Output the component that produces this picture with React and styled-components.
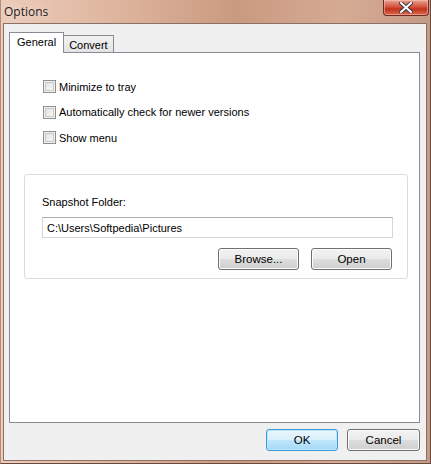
import styled, { createGlobalStyle } from 'styled-components';

const Global = createGlobalStyle`
	html, body {
		margin: 0;
		padding: 0;
		background: #c8a08a;
	}
	* {
		box-sizing: border-box;
	}
`;

const Window = styled.div`
	width: 431px;
	height: 464px;
	display: flex;
	flex-direction: column;
	padding: 0 3px 2px 2px;
	background: linear-gradient(
		to right,
		#ecccbb 0%,
		#dcb29a 30%,
		#c99a80 55%,
		#d6ab94 80%,
		#c49a86 100%
	);
	font-family: 'Liberation Sans', Arial, sans-serif;
	font-size: 11px;
	color: #000;
	border-left: 1px solid #b78a78;
	border-right: 1px solid #6b4a3e;
	border-bottom: 1px solid #6b4a3e;
`;

const TitleBar = styled.div`
	height: 23px;
	display: flex;
	align-items: flex-start;
	justify-content: space-between;
`;

const Title = styled.span`
	font-family: 'Open Sans', 'Liberation Sans', sans-serif;
	font-size: 12px;
	color: #1b1b1b;
	padding: 3px 0 0 1px;
	text-shadow: 0 0 6px rgba(255, 240, 230, 0.9);
`;

const CloseButton = styled.div`
	width: 46px;
	height: 16px;
	margin-right: -2px;
	border: 1px solid #6e2a22;
	border-top: none;
	border-radius: 0 0 4px 4px;
	background: linear-gradient(to bottom, #e9a595 0%, #d4533c 45%, #c3311d 60%, #d96a4c 100%);
	display: grid;
	place-items: center;
	box-shadow: inset 0 0 0 1px rgba(255, 200, 190, 0.5);

	svg {
		display: block;
	}
`;

const Client = styled.div`
	flex: 1;
	background: #f0f0f0;
	border: 1px solid #8b7066;
	display: flex;
	flex-direction: column;
	padding: 8px 6px 8px 5px;
`;

const Tabs = styled.div`
	display: flex;
	align-items: flex-end;
	height: 21px;
	position: relative;
	z-index: 1;
	margin-bottom: -1px;
`;

const Tab = styled.div`
	height: ${(p) => (p.$active ? '21px' : '18px')};
	padding: ${(p) => (p.$active ? '0 7px 2px 7px' : '1px 5px 0 5px')};
	display: flex;
	align-items: center;
	border: 1px solid #898c95;
	border-bottom: ${(p) => (p.$active ? 'none' : '1px solid #898c95')};
	margin-left: ${(p) => (p.$active ? '0' : '-1px')};
	background: ${(p) =>
		p.$active ? '#fff' : 'linear-gradient(to bottom, #f2f2f2, #e3e3e3)'};
`;

const Panel = styled.div`
	height: 371px;
	background: #fff;
	border: 1px solid #898c95;
	padding: 27px 14px 0 14px;
	display: flex;
	flex-direction: column;
`;

const Checks = styled.div`
	display: flex;
	flex-direction: column;
	gap: 12.5px;
	padding-left: 19px;
`;

const CheckRow = styled.label`
	display: flex;
	align-items: center;
	gap: 3px;
	height: 13px;
`;

const Box = styled.span`
	width: 13px;
	height: 13px;
	border: 1px solid #8e8f8f;
	background: linear-gradient(135deg, #dcdcdc 0%, #f4f4f4 70%, #fafafa 100%);
	box-shadow: inset 0 0 0 1px #f2f2f2, inset 0 0 0 2px #c9c9c9;
`;

const Group = styled.div`
	margin-top: 30px;
	width: 384px;
	height: 105px;
	border: 1px solid #dcdcdc;
	border-radius: 3px;
	padding: 20px 14px 0 17px;
	display: flex;
	flex-direction: column;
`;

const Label = styled.div`
	height: 14px;
	line-height: 14px;
`;

const PathInput = styled.div`
	margin-top: 8px;
	width: 351px;
	height: 21px;
	border: 1px solid #d3d6da;
	border-top-color: #abadb3;
	padding: 0 4px;
	display: flex;
	align-items: center;
`;

const ButtonRow = styled.div`
	margin-top: 10px;
	display: flex;
	justify-content: flex-end;
	gap: 12px;
	padding-right: 1px;
`;

const Button = styled.div`
	width: ${(p) => p.$w || 81}px;
	height: 22px;
	border: 1px solid ${(p) => (p.$focus ? '#3c9ad8' : '#707070')};
	border-radius: 3px;
	display: grid;
	place-items: center;
	font-size: 11.5px;
	background: ${(p) =>
		p.$focus
			? 'linear-gradient(to bottom, #eaf6fd 0%, #d9f0fc 50%, #bee6fd 51%, #a7d9f5 100%)'
			: 'linear-gradient(to bottom, #f2f2f2 0%, #ebebeb 50%, #dddddd 51%, #cfcfcf 100%)'};
	box-shadow: inset 0 0 0 1px ${(p) => (p.$focus ? '#b8e6fc' : '#fcfcfc')};
`;

const Footer = styled.div`
	margin-top: auto;
	display: flex;
	justify-content: flex-end;
	gap: 9px;
	padding-bottom: 1px;
`;

const App = () => {
	return (
		<>
			<Global />
			<Window>
				<TitleBar>
					<Title>Options</Title>
					<CloseButton>
						<svg width='14' height='11' viewBox='0 0 14 11'>
							<path
								d='M2 1 L12 10 M12 1 L2 10'
								stroke='#3a3a4a'
								strokeWidth='4'
								strokeLinecap='square'
							/>
							<path
								d='M2 1 L12 10 M12 1 L2 10'
								stroke='#ffffff'
								strokeWidth='2'
								strokeLinecap='square'
							/>
						</svg>
					</CloseButton>
				</TitleBar>
				<Client>
					<Tabs>
						<Tab $active>General</Tab>
						<Tab>Convert</Tab>
					</Tabs>
					<Panel>
						<Checks>
							<CheckRow>
								<Box />
								Minimize to tray
							</CheckRow>
							<CheckRow>
								<Box />
								Automatically check for newer versions
							</CheckRow>
							<CheckRow>
								<Box />
								Show menu
							</CheckRow>
						</Checks>
						<Group>
							<Label>Snapshot Folder:</Label>
							<PathInput>C:\Users\Softpedia\Pictures</PathInput>
							<ButtonRow>
								<Button $w={81}>Browse...</Button>
								<Button $w={81}>Open</Button>
							</ButtonRow>
						</Group>
					</Panel>
					<Footer>
						<Button $focus $w={72}>OK</Button>
						<Button $w={73}>Cancel</Button>
					</Footer>
				</Client>
			</Window>
		</>
	);
};

export default App;
